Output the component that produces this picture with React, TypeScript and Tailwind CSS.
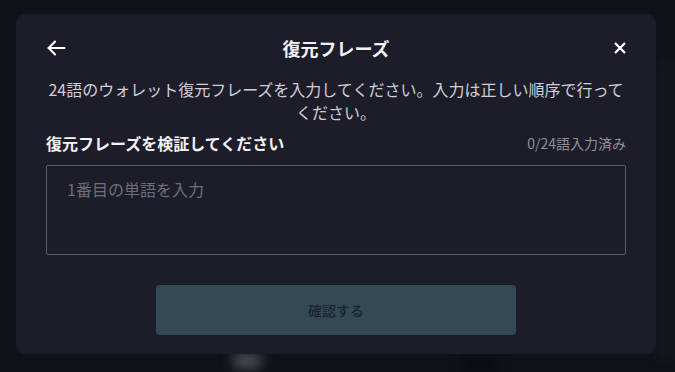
import React from "react";

function BackIcon() {
  return (
    <svg width="22" height="22" viewBox="0 0 24 24" fill="none" stroke="currentColor" strokeWidth="2.2" strokeLinecap="square">
      <path d="M21 12H4" />
      <path d="M11 5l-7 7 7 7" strokeLinecap="round" strokeLinejoin="round" />
    </svg>
  );
}

function CloseIcon() {
  return (
    <svg width="12" height="12" viewBox="0 0 12 12" fill="none" stroke="currentColor" strokeWidth="2.2">
      <path d="M1 1l10 10M11 1L1 11" />
    </svg>
  );
}

export default function App() {
  return (
    <div
      className="relative w-[675px] h-[372px] overflow-hidden bg-[#111119] text-white"
      style={{ fontFamily: '"Noto Sans CJK JP", "Noto Sans", sans-serif' }}
    >
      {/* blurred page behind the modal */}
      <div className="absolute left-[232px] top-[353px] w-[30px] h-[16px] rounded-full bg-[#4a4a52] blur-[6px]" />
      <div className="absolute left-[460px] top-[356px] w-[40px] h-[14px] rounded-full bg-[#0a0a12] blur-[6px]" />
      <div className="absolute left-[657px] top-[60px] w-[18px] h-[300px] bg-[#161620] blur-[4px]" />

      <div className="relative pt-[14px] pl-[16px]">
        <div className="w-[640px] h-[340px] rounded-[10px] bg-[#1d1d2a] px-[30px] pt-[22px] flex flex-col">
          <div className="relative h-[24px] flex items-center justify-center">
            <button className="absolute left-[-1px] top-[1px] text-white">
              <BackIcon />
            </button>
            <div className="text-[18px] font-semibold leading-[24px] text-[#f2f2f5]">復元フレーズ</div>
            <button className="absolute right-[0px] top-[6px] text-white">
              <CloseIcon />
            </button>
          </div>

          <p className="mt-[18px] text-center text-[16px] leading-[23px] text-[#cfcfd7]">
            24語のウォレット復元フレーズを入力してください。入力は正しい順序で行ってください。
          </p>

          <div className="mt-[9px] flex items-center justify-between h-[20px]">
            <div className="text-[16px] font-semibold text-[#f2f2f5]">復元フレーズを検証してください</div>
            <div className="text-[14px] text-[#8f8f9a]">0/24語入力済み</div>
          </div>

          <div className="mt-[12px] h-[90px] border border-[#5d5d68] rounded-[2px] px-[20px] pt-[12px]">
            <div className="text-[16px] leading-[22px] text-[#6e6e78]">1番目の単語を入力</div>
          </div>

          <div className="mt-[30px] flex justify-center">
            <button className="w-[360px] h-[50px] rounded-[4px] bg-[#334a56] text-[14px] text-[#1b2230] font-medium">
              確認する
            </button>
          </div>
        </div>
      </div>
    </div>
  );
}
